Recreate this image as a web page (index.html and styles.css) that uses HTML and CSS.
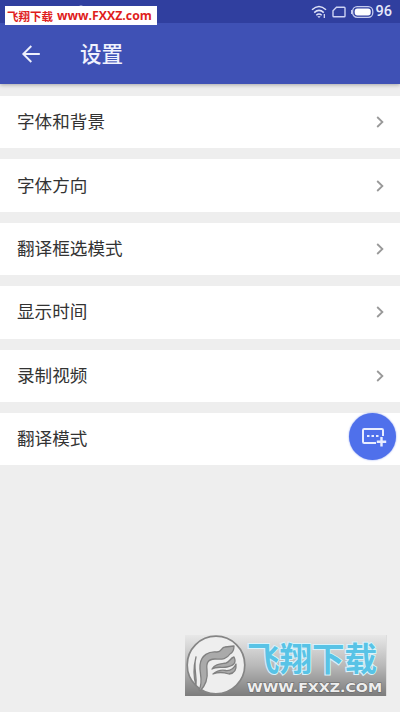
FILE: index.html
```html
<!DOCTYPE html>
<html lang="zh-CN">
<head>
<meta charset="utf-8">
<title>设置</title>
<link rel="stylesheet" href="styles.css">
</head>
<body>
<header class="header">
  <div class="status">
    <svg class="status-dot" width="12" height="12" viewBox="0 0 12 12"><circle cx="6" cy="6" r="5.5" fill="#dfe3f8"/></svg>
    <svg width="16" height="14" viewBox="0 0 16 14" fill="none" stroke="#dfe3f8" stroke-width="1.5"><path d="M1 4.8Q8-1.8 15 4.8M3.2 7.6Q8 3.2 12.8 7.6M5.3 10.2Q8 7.8 10.7 10.2"/><path d="M6.3 11.3h3.4L8 13z" fill="#dfe3f8" stroke="none"/><path d="M13.3 9v4" stroke-width="1.2"/></svg>
    <svg width="14" height="12" viewBox="0 0 14 12" fill="none" stroke="#cdd3f4" stroke-width="1.4"><path d="M4.5 1.2H12.2Q13 1.2 13 2V10Q13 10.8 12.2 10.8H1.8Q1 10.8 1 10V4.7z"/></svg>
    <svg width="23" height="12" viewBox="0 0 23 12"><rect x="1.6" y=".7" width="20.2" height="10.6" rx="4.5" fill="none" stroke="#c5cbee" stroke-width="1.3"/><rect x="3.7" y="2.6" width="16" height="6.8" rx="2.6" fill="#fff"/><path d="M.6 4v4" stroke="#c5cbee" stroke-width="1.2"/></svg>
    <span class="battery">96</span>
  </div>
  <div class="toolbar">
    <svg class="back" width="20" height="20" viewBox="0 0 20 20" fill="none" stroke="#eef0fc" stroke-width="1.9"><path d="M18.8 10H2.5M10.3 2L2.3 10l8 8"/></svg>
    <h1 class="title">设置</h1>
  </div>
  <div class="banner"><span class="banner-cn">飞翔下载</span><span class="banner-url">www.FXXZ.com</span></div>
</header>
<main class="list">
  <div class="row"><span>字体和背景</span><svg class="chevron" viewBox="0 0 8 12"><path d="M1.2 1l5.2 5-5.2 5"/></svg></div>
  <div class="row"><span>字体方向</span><svg class="chevron" viewBox="0 0 8 12"><path d="M1.2 1l5.2 5-5.2 5"/></svg></div>
  <div class="row"><span>翻译框选模式</span><svg class="chevron" viewBox="0 0 8 12"><path d="M1.2 1l5.2 5-5.2 5"/></svg></div>
  <div class="row"><span>显示时间</span><svg class="chevron" viewBox="0 0 8 12"><path d="M1.2 1l5.2 5-5.2 5"/></svg></div>
  <div class="row"><span>录制视频</span><svg class="chevron" viewBox="0 0 8 12"><path d="M1.2 1l5.2 5-5.2 5"/></svg></div>
  <div class="row"><span>翻译模式</span></div>
</main>
<button class="fab" aria-label="添加">
  <svg width="26" height="20" viewBox="0 0 26 20" fill="none" stroke="#e8edff" stroke-width="2"><path d="M22 9V3.2Q22 2 20.8 2H3.2Q2 2 2 3.2V14.8Q2 16 3.2 16H15"/><path d="M20.5 10v9.5M15.8 14.8h9.4" stroke-width="2.4"/><path d="M6 9h2.5M10.5 9H13M15 9h2.5" stroke-width="2.2"/></svg>
</button>
<div class="watermark">
  <svg class="logo" width="60" height="60" viewBox="0 0 60 60">
    <circle cx="30" cy="30" r="28.8" fill="#eee" stroke="#858585" stroke-width="1.7"/>
    <g fill="#aaa" stroke="#808080" stroke-width="1.3" stroke-linejoin="round">
      <path d="M13 55C18 46 13 39 14 30C15 20 23 16 31 17C36 17 35 12 39 12L48 11Q48 17 44 19C40 25 35 24 29 24C22 24 20 28 21 35C22 43 19 51 14 56z"/>
      <path d="M26 34C29 29 34 29 40 28C44 27 44 23 48 22C51 28 47 31 41 32C36 33 30 31 26 34z"/>
      <path d="M27 39Q33 34 40 35.500Q47 36 50 29Q51 38 43 39Q34 36 27 39z"/>
      <path d="M10 22C7 33 11 39 10 50Q6 38 10 22z"/>
    </g>
  </svg>
  <div class="mark-text">
    <div class="mark-cn">飞翔下载</div>
    <svg class="mark-url" width="138" height="15" viewBox="0 0 138 15"><text x="1" y="12" textLength="135" lengthAdjust="spacingAndGlyphs">WWW.FXXZ.COM</text></svg>
  </div>
</div>
</body>
</html>
```
FILE: styles.css
```css
* { box-sizing: border-box; }
body {
  margin: 0;
  width: 400px;
  height: 712px;
  overflow: hidden;
  position: relative;
  background: #eee;
  color: #333;
  font-family: "Noto Sans CJK SC", sans-serif;
}
.header {
  position: relative;
  height: 84px;
  background: #3f51b5;
  box-shadow: 0 1px 4px rgba(0, 0, 0, .3);
}
.status {
  height: 23px;
  background: #303f9f;
  display: flex;
  align-items: center;
  justify-content: flex-end;
  gap: 5px;
  padding-right: 8px;
}
.status-dot { margin-right: auto; margin-left: 75px; margin-bottom: 1px; }
.battery {
  color: #e6e9fa;
  font: 500 14.5px/22px Roboto, sans-serif;
  margin-left: -3px;
}
.toolbar {
  height: 61px;
  display: flex;
  align-items: center;
  padding-left: 21px;
}
.title {
  margin: -2px 0 0 39px;
  color: #f0f2fd;
  font-size: 21.5px;
  line-height: 30px;
  font-weight: 500;
}
.banner {
  position: absolute;
  left: 5px;
  top: 6px;
  width: 152px;
  height: 19px;
  display: flex;
  align-items: center;
  gap: 4px;
  padding-left: 2px;
  background: #fff;
  color: #df1d1d;
  font-weight: 700;
  white-space: nowrap;
}
.banner-cn { font-size: 11.5px; line-height: 18px; }
.banner-url { font: 700 12.3px/18px "Open Sans", sans-serif; }
.list {
  display: flex;
  flex-direction: column;
  gap: 11px;
  padding-top: 12px;
}
.row {
  height: 52.4px;
  display: flex;
  align-items: center;
  justify-content: space-between;
  padding: 0 16px 0 17px;
  background: #fff;
  font-size: 17.6px;
  line-height: 26px;
}
.row span { margin-top: -2px; }
.chevron {
  width: 8px;
  height: 12px;
  fill: none;
  stroke: #999;
  stroke-width: 1.8;
}
.fab {
  position: absolute;
  left: 349px;
  top: 413px;
  width: 47px;
  height: 47px;
  padding: 0 0 0 2px;
  border: 0;
  border-radius: 50%;
  background: #4f70eb;
  box-shadow: 0 0 2px #8299f0;
  display: flex;
  align-items: center;
  justify-content: center;
}
.watermark {
  position: absolute;
  left: 185px;
  top: 635px;
  width: 202px;
  height: 61px;
  display: flex;
  border-right: 1px solid #ddd;
  background: linear-gradient(#e8e8e8, #b9b9b9 50%, #7c7c7c);
}
.logo { flex: none; margin-left: 1px; }
.mark-text { width: 138px; }
.mark-cn {
  height: 44px;
  padding-left: 1px;
  font-size: 32.5px;
  line-height: 44px;
  font-weight: 700;
  color: #58c3e6;
  white-space: nowrap;
  -webkit-text-stroke: 2px #d8f3fb;
  paint-order: stroke fill;
}
.mark-url {
  display: block;
  margin-top: 1px;
  font: 700 13px "DejaVu Sans", sans-serif;
  fill: #eee;
  stroke: #666;
  stroke-width: 1px;
  paint-order: stroke;
}
```
